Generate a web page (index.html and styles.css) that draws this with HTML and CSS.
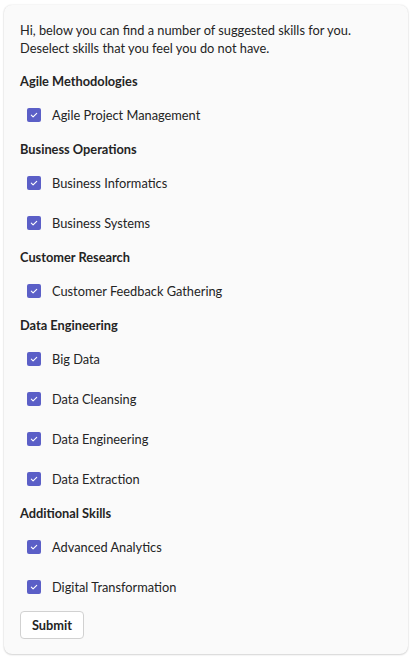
FILE: index.html
```html
<!DOCTYPE html>
<html>
<head>
<meta charset="utf-8">
<link rel="stylesheet" href="styles.css">
</head>
<body>
<div class="card">
  <p class="intro">Hi, below you can find a number of suggested skills for you.<br>Deselect skills that you feel you do not have.</p>

  <div class="group-title">Agile Methodologies</div>
  <label class="row"><span class="box"><svg viewBox="0 0 12 12" width="12" height="12"><path d="M3.3 6.2 L5.1 7.9 L8.7 4.3" fill="none" stroke="#fff" stroke-width="1.1" stroke-linecap="round" stroke-linejoin="round"/></svg></span><span class="label">Agile Project Management</span></label>

  <div class="group-title">Business Operations</div>
  <label class="row"><span class="box"><svg viewBox="0 0 12 12" width="12" height="12"><path d="M3.3 6.2 L5.1 7.9 L8.7 4.3" fill="none" stroke="#fff" stroke-width="1.1" stroke-linecap="round" stroke-linejoin="round"/></svg></span><span class="label">Business Informatics</span></label>
  <label class="row"><span class="box"><svg viewBox="0 0 12 12" width="12" height="12"><path d="M3.3 6.2 L5.1 7.9 L8.7 4.3" fill="none" stroke="#fff" stroke-width="1.1" stroke-linecap="round" stroke-linejoin="round"/></svg></span><span class="label">Business Systems</span></label>

  <div class="group-title">Customer Research</div>
  <label class="row"><span class="box"><svg viewBox="0 0 12 12" width="12" height="12"><path d="M3.3 6.2 L5.1 7.9 L8.7 4.3" fill="none" stroke="#fff" stroke-width="1.1" stroke-linecap="round" stroke-linejoin="round"/></svg></span><span class="label">Customer Feedback Gathering</span></label>

  <div class="group-title">Data Engineering</div>
  <label class="row"><span class="box"><svg viewBox="0 0 12 12" width="12" height="12"><path d="M3.3 6.2 L5.1 7.9 L8.7 4.3" fill="none" stroke="#fff" stroke-width="1.1" stroke-linecap="round" stroke-linejoin="round"/></svg></span><span class="label">Big Data</span></label>
  <label class="row"><span class="box"><svg viewBox="0 0 12 12" width="12" height="12"><path d="M3.3 6.2 L5.1 7.9 L8.7 4.3" fill="none" stroke="#fff" stroke-width="1.1" stroke-linecap="round" stroke-linejoin="round"/></svg></span><span class="label">Data Cleansing</span></label>
  <label class="row"><span class="box"><svg viewBox="0 0 12 12" width="12" height="12"><path d="M3.3 6.2 L5.1 7.9 L8.7 4.3" fill="none" stroke="#fff" stroke-width="1.1" stroke-linecap="round" stroke-linejoin="round"/></svg></span><span class="label">Data Engineering</span></label>
  <label class="row"><span class="box"><svg viewBox="0 0 12 12" width="12" height="12"><path d="M3.3 6.2 L5.1 7.9 L8.7 4.3" fill="none" stroke="#fff" stroke-width="1.1" stroke-linecap="round" stroke-linejoin="round"/></svg></span><span class="label">Data Extraction</span></label>

  <div class="group-title">Additional Skills</div>
  <label class="row"><span class="box"><svg viewBox="0 0 12 12" width="12" height="12"><path d="M3.3 6.2 L5.1 7.9 L8.7 4.3" fill="none" stroke="#fff" stroke-width="1.1" stroke-linecap="round" stroke-linejoin="round"/></svg></span><span class="label">Advanced Analytics</span></label>
  <label class="row"><span class="box"><svg viewBox="0 0 12 12" width="12" height="12"><path d="M3.3 6.2 L5.1 7.9 L8.7 4.3" fill="none" stroke="#fff" stroke-width="1.1" stroke-linecap="round" stroke-linejoin="round"/></svg></span><span class="label">Digital Transformation</span></label>

  <button class="submit">Submit</button>
</div>
</body>
</html>
```

FILE: styles.css
```css
html, body {
  margin: 0;
  padding: 0;
  background: #ffffff;
}
body {
  padding: 5px 8px 7px 4px;
  font-family: "Lato", "Liberation Sans", sans-serif;
  font-size: 12.8px;
  color: #242424;
}
.card {
  display: flex;
  flex-direction: column;
  align-items: flex-start;
  background: #fafafa;
  border-radius: 8px;
  box-shadow: 0 0 2px rgba(0,0,0,0.12), 0 1px 2px rgba(0,0,0,0.14);
  padding: 16px 16px 15px 16px;
}
.intro {
  margin: 0 0 9.5px 0;
  line-height: 18px;
}
.group-title {
  font-weight: 700;
  line-height: 20px;
  margin: 4px 0 4px 0;
}
.row {
  display: flex;
  align-items: center;
  height: 40px;
}
.box {
  width: 14px;
  height: 14px;
  border-radius: 2px;
  background: #5b5fc7;
  margin-left: 7px;
  margin-right: 11px;
  display: flex;
  align-items: center;
  justify-content: center;
}
.box svg {
  display: block;
}
.label {
  line-height: 20px;
}
.submit {
  margin-top: 4px;
  width: 64px;
  height: 28px;
  background: #ffffff;
  border: 1px solid #d1d1d1;
  border-radius: 4px;
  font-family: inherit;
  font-size: 12.8px;
  font-weight: 700;
  color: #242424;
  padding: 0;
}
```
